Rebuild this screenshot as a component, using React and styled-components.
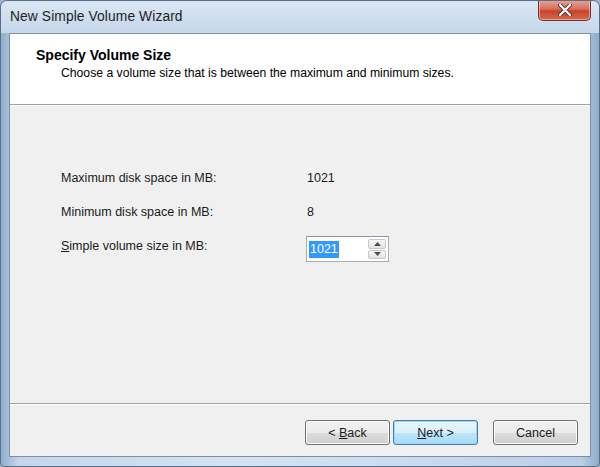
import React from 'react';
import styled, { createGlobalStyle } from 'styled-components';

const GlobalStyle = createGlobalStyle`
  html, body {
    margin: 0;
    padding: 0;
    width: 600px;
    height: 467px;
    overflow: hidden;
    background: #9fb4cc;
  }
  * { box-sizing: border-box; }
`;

const Frame = styled.div`
  width: 600px;
  height: 467px;
  display: flex;
  flex-direction: column;
  border: 1px solid #5a6f86;
  border-radius: 7px 7px 4px 4px;
  background: linear-gradient(90deg, #8faecd 0%, #c4d6ea 3%, #d5e3f1 40%, #c9dbee 70%, #b9cfe6 97%, #8faacb 100%);
  font-family: "Liberation Sans", Arial, sans-serif;
  overflow: hidden;
`;

const TitleBar = styled.div`
  height: 32px;
  display: flex;
  align-items: flex-start;
  justify-content: space-between;
  padding-left: 9px;
  background: linear-gradient(180deg, #dbe7f4 0%, #cddcee 60%, #c6d8ec 100%);
`;

const Caption = styled.span`
  margin-top: 8px;
  font-family: "Segoe UI", "Liberation Sans", Arial, sans-serif;
  font-size: 13.8px;
  color: #1e1e1e;
  letter-spacing: 0.1px;
`;

const CloseButton = styled.div`
  width: 53px;
  height: 21px;
  margin-right: 8px;
  margin-top: -1px;
  display: flex;
  align-items: center;
  justify-content: center;
  border: 1px solid #6a3434;
  border-top: none;
  border-radius: 0 0 5px 5px;
  background: linear-gradient(180deg, #e7a697 0%, #d7705c 45%, #c7432a 55%, #d56a4f 100%);
  box-shadow: inset 0 0 0 1px rgba(255, 210, 200, 0.55);
`;

const Client = styled.div`
  flex: 1;
  margin: 0 8px 9px 8px;
  display: flex;
  flex-direction: column;
  border: 1px solid #7d8fa3;
  background: #f0f0f0;
`;

const Header = styled.div`
  height: 70px;
  background: #ffffff;
  padding: 13px 0 0 26px;
`;

const HeaderTitle = styled.div`
  font-weight: bold;
  font-size: 14px;
  color: #000;
`;

const HeaderText = styled.div`
  margin-top: 3px;
  padding-left: 25px;
  font-size: 12.2px;
  color: #000;
`;

const Separator = styled.div`
  height: 2px;
  border-top: 1px solid #a0a0a0;
  border-bottom: 1px solid #ffffff;
`;

const Body = styled.div`
  flex: 1;
  padding: 55px 0 0 51px;
  display: grid;
  grid-template-columns: 246px auto;
  grid-auto-rows: 34px;
  align-content: start;
  align-items: center;
  font-size: 12.5px;
  color: #1a1a1a;
`;

const Label = styled.span``;

const Value = styled.span``;

const Spin = styled.div`
  width: 83px;
  height: 26px;
  margin: 6px 0 0 -1px;
  display: flex;
  align-items: center;
  gap: 2px;
  padding: 2px;
  border: 1px solid #abadb3;
  border-top-color: #8e98a4;
  background: #ffffff;
`;

const SpinText = styled.div`
  flex: 1;
  display: flex;
  align-items: center;
`;

const Selected = styled.span`
  background: #3399ff;
  color: #fff;
  padding: 1px;
  line-height: 15px;
`;

const Arrows = styled.div`
  width: 18px;
  height: 20px;
  display: flex;
  flex-direction: column;
  gap: 1px;
`;

const ArrowBtn = styled.div`
  flex: 1;
  display: flex;
  align-items: center;
  justify-content: center;
  border: 1px solid #c4c8ce;
  border-radius: 2px;
  background: linear-gradient(180deg, #f7f7f7, #e4e4e4);
`;

const Footer = styled.div`
  height: 51px;
  display: flex;
  align-items: flex-start;
  justify-content: flex-end;
  padding: 15px 12px 0 0;
`;

const Button = styled.div`
  width: 85px;
  height: 25px;
  margin-left: ${p => p.$gap || 0}px;
  display: flex;
  align-items: center;
  justify-content: center;
  white-space: pre;
  font-size: 12.5px;
  color: #1a1a1a;
  border: 1px solid ${p => (p.$focus ? '#3c7fb1' : '#707070')};
  border-radius: 3px;
  background: ${p => (p.$focus
    ? 'linear-gradient(180deg, #eaf6fd 0%, #d9f0fc 50%, #bee6fd 51%, #a7d9f5 100%)'
    : 'linear-gradient(180deg, #f2f2f2 0%, #ebebeb 50%, #dddddd 51%, #cfcfcf 100%)')};
  box-shadow: inset 0 0 0 1px ${p => (p.$focus ? '#9ed8f5' : '#fbfbfb')};
`;

const U = styled.span`
  text-decoration: underline;
`;

const Arrow = ({ up }) => (
  <svg width="7" height="4" viewBox="0 0 7 4">
    <path d={up ? 'M0 4 L3.5 0 L7 4 Z' : 'M0 0 L3.5 4 L7 0 Z'} fill="#4d4d4d" />
  </svg>
);

const App = () => (
  <>
    <GlobalStyle />
    <Frame>
      <TitleBar>
        <Caption>New Simple Volume Wizard</Caption>
        <CloseButton>
          <svg width="14" height="12" viewBox="0 0 14 12">
            <path d="M2 1 L12 11 M12 1 L2 11" stroke="#5b2020" strokeWidth="4" strokeLinecap="round" />
            <path d="M2 1 L12 11 M12 1 L2 11" stroke="#ffffff" strokeWidth="2.4" strokeLinecap="round" />
          </svg>
        </CloseButton>
      </TitleBar>
      <Client>
        <Header>
          <HeaderTitle>Specify Volume Size</HeaderTitle>
          <HeaderText>Choose a volume size that is between the maximum and minimum sizes.</HeaderText>
        </Header>
        <Separator />
        <Body>
          <Label>Maximum disk space in MB:</Label>
          <Value>1021</Value>
          <Label>Minimum disk space in MB:</Label>
          <Value>8</Value>
          <Label><U>S</U>imple volume size in MB:</Label>
          <Spin>
            <SpinText><Selected>1021</Selected></SpinText>
            <Arrows>
              <ArrowBtn><Arrow up /></ArrowBtn>
              <ArrowBtn><Arrow /></ArrowBtn>
            </Arrows>
          </Spin>
        </Body>
        <Separator />
        <Footer>
          <Button>{'< '}<U>B</U>ack</Button>
          <Button $focus $gap={3}><U>N</U>ext{' >'}</Button>
          <Button $gap={15}>Cancel</Button>
        </Footer>
      </Client>
    </Frame>
  </>
);

export default App;
